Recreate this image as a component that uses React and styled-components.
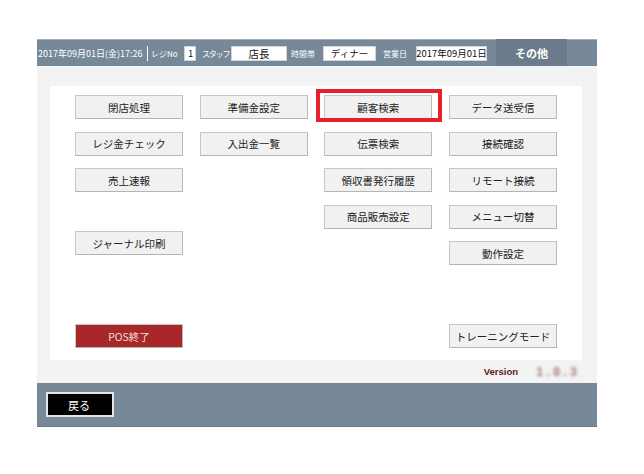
import styled, { createGlobalStyle } from "styled-components";

const GlobalStyle = createGlobalStyle`
  body {
    margin: 0;
    background: #ffffff;
    font-family: "Noto Sans CJK JP", "Liberation Sans", sans-serif;
  }
`;

const columns = [
  [
    { label: "閉店処理" },
    { label: "レジ金チェック" },
    { label: "売上速報" },
    { label: "ジャーナル印刷", gapBefore: true },
  ],
  [{ label: "準備金設定" }, { label: "入出金一覧" }],
  [
    { label: "顧客検索", marked: true },
    { label: "伝票検索" },
    { label: "領収書発行履歴" },
    { label: "商品販売設定" },
  ],
  [
    { label: "データ送受信" },
    { label: "接続確認" },
    { label: "リモート接続" },
    { label: "メニュー切替" },
    { label: "動作設定" },
  ],
];

const App = () => {
  return (
    <>
      <GlobalStyle />
      <Screen>
        <Header>
          <Clock>2017年09月01日(金)17:26</Clock>
          <Divider />
          <HeaderText $w={33}>レジNo</HeaderText>
          <Field $w={12} $gap={6} $left>1</Field>
          <HeaderText $w={29} $tight>スタッフ</HeaderText>
          <Field $w={56} $gap={4} $size={10.5}>店長</Field>
          <HeaderText $w={32}>時間帯</HeaderText>
          <Field $w={53} $gap={7}>ディナー</Field>
          <HeaderText $w={33}>営業日</HeaderText>
          <Field $w={71} $gap={9}>2017年09月01日</Field>
          <OtherTab>その他</OtherTab>
        </Header>

        <Body>
          <Panel>
            <ButtonGrid>
              {columns.map((col, i) => (
                <Column key={i}>
                  {col.map((b) => (
                    <MenuButton key={b.label} $gapBefore={b.gapBefore} $marked={b.marked}>
                      {b.label}
                    </MenuButton>
                  ))}
                </Column>
              ))}
            </ButtonGrid>
            <BottomRow>
              <MenuButton $danger>POS終了</MenuButton>
              <Spacer />
              <Spacer />
              <MenuButton>トレーニングモード</MenuButton>
            </BottomRow>
          </Panel>
          <VersionRow>
            <VersionLabel>Version</VersionLabel>
            <VersionNumber>1.8.3</VersionNumber>
          </VersionRow>
        </Body>

        <Footer>
          <BackButton>戻る</BackButton>
        </Footer>
      </Screen>
    </>
  );
};

const Screen = styled.div`
  width: 560px;
  margin: 39px 0 0 37px;
  display: flex;
  flex-direction: column;
`;

const Header = styled.div`
  height: 27px;
  box-sizing: border-box;
  background: #778899;
  border-top: 1px solid #a3adb9;
  display: flex;
  align-items: center;
  padding-left: 1px;
`;

const Clock = styled.span`
  width: 109px;
  flex-shrink: 0;
  color: #ffffff;
  font-size: 9px;
  white-space: nowrap;
`;

const HeaderText = styled.span`
  width: ${(p) => p.$w}px;
  flex-shrink: 0;
  color: #ffffff;
  font-size: 8px;
  letter-spacing: ${(p) => (p.$tight ? "-1.2px" : "0")};
  white-space: nowrap;
`;

const Divider = styled.span`
  width: 1px;
  height: 15px;
  background: #ffffff;
  margin: 0 3px 0 0;
`;

const Field = styled.span`
  width: ${(p) => p.$w}px;
  flex-shrink: 0;
  height: 15px;
  box-sizing: border-box;
  background: #ffffff;
  border: 1px solid #cfd5dc;
  color: #111;
  font-size: ${(p) => p.$size || 9.5}px;
  line-height: 13px;
  display: flex;
  align-items: center;
  justify-content: ${(p) => (p.$left ? "flex-start" : "center")};
  padding-left: ${(p) => (p.$left ? "3px" : "0")};
  margin-right: ${(p) => p.$gap}px;
  white-space: nowrap;
`;

const OtherTab = styled.div`
  width: 71px;
  align-self: stretch;
  margin-top: -1px;
  background: #6c7b8c;
  color: #ffffff;
  font-size: 11px;
  font-weight: bold;
  display: flex;
  align-items: center;
  justify-content: center;
`;

const Body = styled.div`
  background: #f3f3f3;
  padding: 20px 15px 0 13px;
`;

const Panel = styled.div`
  background: #ffffff;
  height: 274px;
  box-sizing: border-box;
  padding: 9px 25px 12px 25px;
  display: flex;
  flex-direction: column;
`;

const ButtonGrid = styled.div`
  flex: 1;
  display: grid;
  grid-template-columns: repeat(4, 108px);
  justify-content: space-between;
  align-items: start;
`;

const Column = styled.div`
  display: flex;
  flex-direction: column;
  gap: 12.5px;
`;

const BottomRow = styled.div`
  display: grid;
  grid-template-columns: repeat(4, 108px);
  justify-content: space-between;
`;

const Spacer = styled.div``;

const MenuButton = styled.div`
  position: relative;
  height: 24px;
  box-sizing: border-box;
  border: 1px solid #c6c6c6;
  border-bottom-color: #b4b4b4;
  border-right-color: #b8b8b8;
  background: ${(p) => (p.$danger ? "#a8282a" : "#f1f1f1")};
  color: ${(p) => (p.$danger ? "#f3dede" : "#222222")};
  font-size: 10.5px;
  display: flex;
  align-items: center;
  justify-content: center;
  white-space: nowrap;
  margin-top: ${(p) => (p.$gapBefore ? "26.5px" : "0")};

  &::after {
    content: "";
    display: ${(p) => (p.$marked ? "block" : "none")};
    position: absolute;
    top: -7px;
    left: -9px;
    right: -11px;
    bottom: -4px;
    border: 4px solid #e8202a;
  }
`;

const VersionRow = styled.div`
  height: 23px;
  display: flex;
  align-items: center;
  justify-content: flex-end;
  padding-right: 2px;
`;

const VersionLabel = styled.span`
  font-family: "Liberation Sans", sans-serif;
  font-size: 9.5px;
  font-weight: bold;
  color: #5a1c22;
  margin-right: 18px;
`;

const VersionNumber = styled.span`
  font-family: "Liberation Sans", sans-serif;
  font-size: 13px;
  font-weight: bold;
  letter-spacing: 3px;
  color: #a87f84;
  filter: blur(1.4px);
`;

const Footer = styled.div`
  height: 44px;
  box-sizing: border-box;
  background: #778899;
  border-bottom: 1px solid #6a7888;
  display: flex;
  align-items: center;
  padding-left: 9px;
`;

const BackButton = styled.div`
  width: 68px;
  height: 25px;
  box-sizing: border-box;
  background: #000000;
  border: 2px solid #e4e4e4;
  color: #ffffff;
  font-size: 11px;
  display: flex;
  align-items: center;
  padding-left: 20px;
`;

export default App;
